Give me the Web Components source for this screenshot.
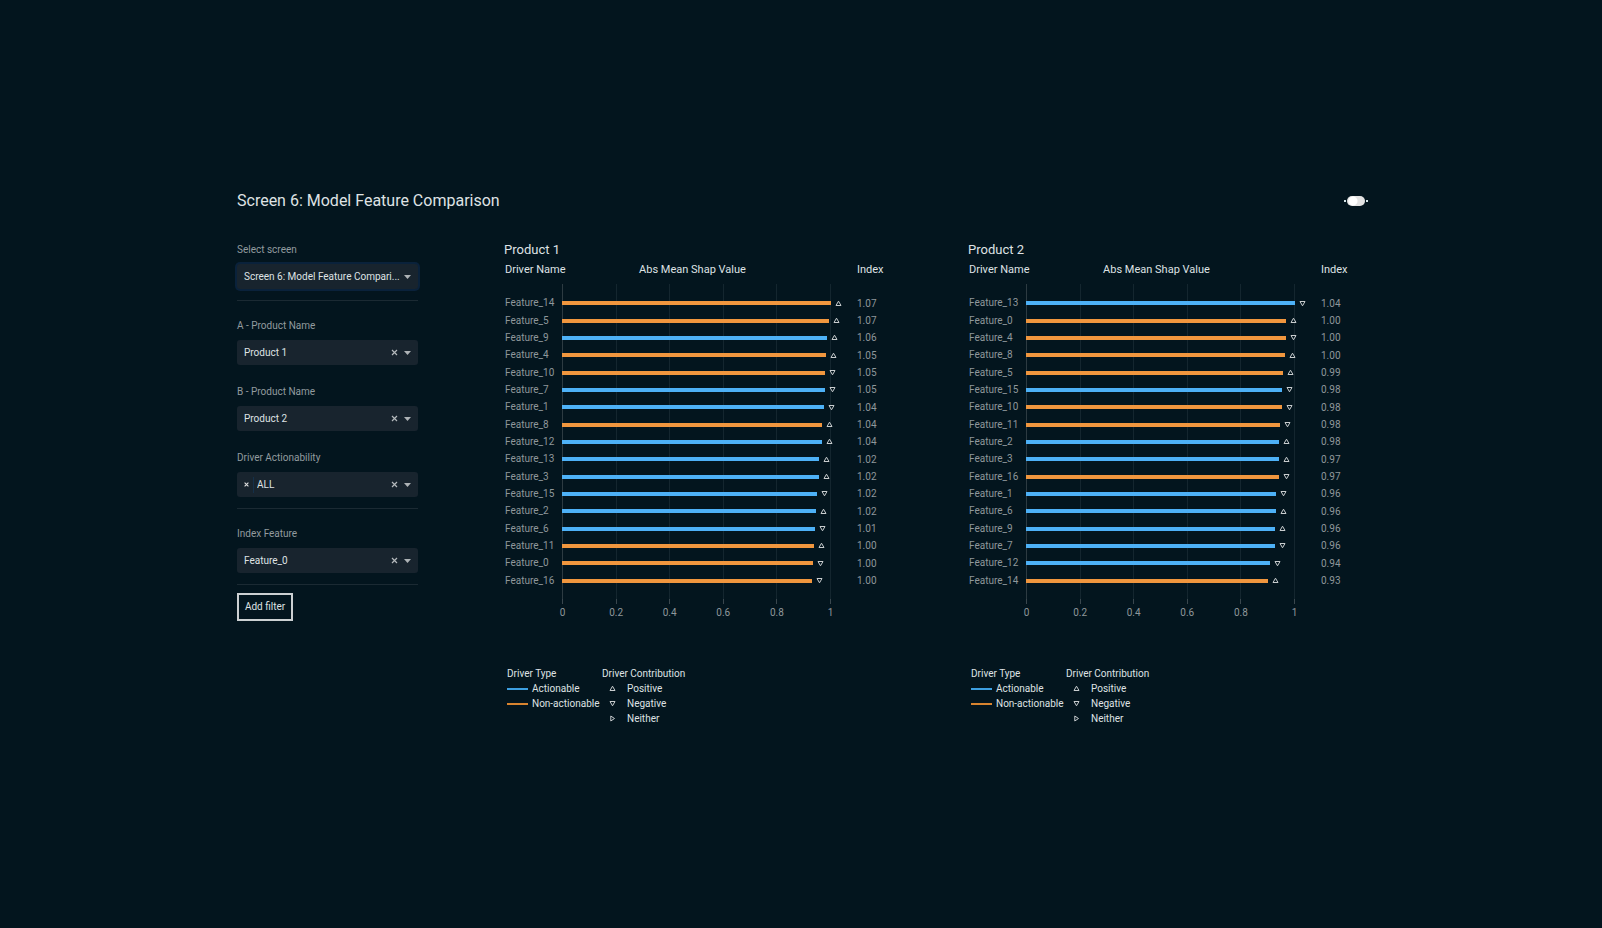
<!DOCTYPE html>
<html lang="en">
<head>
<meta charset="utf-8">
<title>Model Feature Comparison</title>
<style>
  body { margin: 0; background: #03151e; color: #dfe2e4; font: 10px/16px Roboto, "Liberation Sans", sans-serif; }
</style>
</head>
<body>
<feature-dashboard></feature-dashboard>

<template id="tpl-dashboard">
  <style>
    :host { display: block; padding: 192px 234px 48px 237px; }
    header { display: flex; justify-content: space-between; align-items: center; height: 18px; }
    h1 { margin: 0; font-size: 16px; line-height: 20px; font-weight: 400; }
    main { display: grid; grid-template-columns: 181px 1fr 1fr; column-gap: 64px; margin-top: 32px; }
    aside { display: flex; flex-direction: column; }
    product-chart:first-of-type { margin-left: 22px; margin-right: -11px; }
    product-chart:last-of-type { margin-left: 11px; }
    hr { width: 100%; height: 1px; margin: 11px 0 0; border: 0; background: #1b2a33; }
    hr.break { margin-bottom: 17px; }
    button { align-self: flex-start; box-sizing: border-box; width: 56px; height: 28px; margin-top: 8px; padding: 0;
      border: 2px solid #ccd0d2; background: transparent; color: inherit; font: inherit; }
  </style>
  <header>
    <h1>Screen 6: Model Feature Comparison</h1>
    <theme-switch></theme-switch>
  </header>
  <main>
    <aside>
      <filter-field label="Select screen" value="Screen 6: Model Feature Compari..." focused></filter-field>
      <hr class="break">
      <filter-field label="A - Product Name" value="Product 1" clearable></filter-field>
      <filter-field class="next" label="B - Product Name" value="Product 2" clearable></filter-field>
      <filter-field class="next" label="Driver Actionability" value="ALL" clearable tag></filter-field>
      <hr class="break">
      <filter-field label="Index Feature" value="Feature_0" clearable></filter-field>
      <hr>
      <button type="button">Add filter</button>
    </aside>
    <product-chart name="Product 1"></product-chart>
    <product-chart name="Product 2"></product-chart>
  </main>
</template>

<template id="tpl-switch">
  <style>
    :host { display: block; }
    label { display: flex; align-items: center; gap: 1px; }
    i { width: 2px; height: 2px; background: #d4e4e8; }
    input { appearance: none; display: block; width: 18px; height: 10px; margin: 0; border-radius: 5px;
      background: radial-gradient(circle at 6px 5px, #fff 4px, #e3e3e3 5px); }
  </style>
  <label><i></i><input type="checkbox" role="switch" aria-label="Theme"><i></i></label>
</template>

<template id="tpl-field">
  <style>
    :host { display: block; }
    :host(.next) { margin-top: 19px; }
    label { display: block; color: #929b9f; line-height: 16px; margin-bottom: 6px; }
    .box { display: flex; align-items: center; box-sizing: border-box; height: 25px; padding: 0 7px; border-radius: 3px; background: #18242e; }
    :host([focused]) .box { box-shadow: 0 0 0 2px #0a223b; }
    select { flex: 1; min-width: 0; height: 100%; appearance: none; border: 0; margin: 0; padding: 0; background: transparent; color: inherit; font: inherit; outline: 0; }
    button { border: 0; background: none; padding: 0; margin: 0; color: #b4b9bc; display: flex; }
    .clear { margin-right: 6px; }
    .drop { color: #aeb3b6; display: block; }
    .remove { padding-right: 4px; margin-right: 3px; height: 16px; align-items: center; border-right: 1px solid #14304a; color: #e0e0e0; }
    :host(:not([clearable])) .clear, :host(:not([tag])) .remove { display: none; }
  </style>
  <label for="choice"></label>
  <div class="box">
    <button class="remove" type="button" aria-label="Remove"><svg width="5" height="5" viewBox="0 0 5 5"><path d="M.6.6 4.4 4.4M4.4.6.6 4.4" stroke="currentColor" stroke-width="1.1"/></svg></button>
    <select id="choice"><option></option></select>
    <button class="clear" type="button" aria-label="Clear"><svg width="7" height="7" viewBox="0 0 7 7"><path d="M1 1 6 6M6 1 1 6" stroke="currentColor" stroke-width="1.2"/></svg></button>
    <svg class="drop" width="7" height="4" viewBox="0 0 7 4"><path d="M0 0H7L3.500 4Z" fill="currentColor"/></svg>
  </div>
</template>

<template id="tpl-chart">
  <style>
    :host { display: block; min-width: 0; }
    h2 { margin: 0; font-size: 13px; line-height: 16px; font-weight: 400; }
    .chart { display: grid; grid-template-columns: 58px 1fr 73px; }
    .grid { grid-column: 2; grid-row: 1; display: flex; justify-content: space-between; margin-top: 26px; }
    .grid i { width: 1px; background: #14262f; }
    .grid i:first-child { background: #2d3b42; }
    table { grid-column: 1 / -1; grid-row: 1; table-layout: fixed; width: 100%; border-collapse: collapse; margin-bottom: 10px; position: relative; }
    th, td { padding: 0; text-align: left; font-weight: 400; white-space: nowrap; vertical-align: middle; }
    thead th { font-size: 11px; line-height: 16px; height: 36px; vertical-align: top; padding-top: 4px; box-sizing: border-box; }
    thead th:nth-child(2) { text-align: center; padding-right: 8px; }
    tbody th, tbody td { color: #8f979b; line-height: 17px; }
    tbody tr:nth-child(3n+1) th { line-height: 18px; }
    .name { padding-left: 1px; }
    .index { padding-left: 26px; }
    .bar { display: flex; align-items: center; gap: 4px; }
    .bar i { flex: none; height: 4px; background: #f0963e; }
    .bar i.a { background: #4db1f7; }
    svg { flex: none; display: block; }
    .axis { grid-column: 2; display: flex; justify-content: space-between; color: #8f979b; }
    .axis span { width: 1px; display: flex; flex-direction: column; align-items: center; gap: 1px; }
    .axis span::before { content: ""; width: 1px; height: 5px; background: #3a474e; }
    .legend { display: flex; gap: 18px; margin: 45px 0 0 3px; }
    .legend ul { list-style: none; margin: 0; padding: 0; }
    .legend li { display: flex; align-items: center; height: 15px; gap: 4px; white-space: nowrap; }
    .legend .type { width: 77px; }
    .legend .kind li { gap: 11px; padding-left: 7px; }
    .legend i { width: 21px; height: 2px; background: #d9842f; flex: none; }
    .legend i.a { background: #3d9fe0; }
    .legend h3 { margin: 0; font-size: 10px; line-height: 15px; font-weight: 400; white-space: nowrap; }
  </style>
  <h2></h2>
  <div class="chart">
    <div class="grid"><i></i><i></i><i></i><i></i><i></i><i></i></div>
    <table>
      <colgroup><col style="width:58px"><col><col style="width:73px"></colgroup>
      <thead><tr><th class="name">Driver Name</th><th>Abs Mean Shap Value</th><th class="index">Index</th></tr></thead>
      <tbody></tbody>
    </table>
    <div class="axis"><span>0</span><span>0.2</span><span>0.4</span><span>0.6</span><span>0.8</span><span>1</span></div>
  </div>
  <div class="legend">
    <div class="type"><h3>Driver Type</h3><ul><li><i class="a"></i>Actionable</li><li><i></i>Non-actionable</li></ul></div>
    <div class="kind"><h3>Driver Contribution</h3><ul><li data-m="u">Positive</li><li data-m="d">Negative</li><li data-m="r">Neither</li></ul></div>
  </div>
</template>

<script>
  const stamp = (host, id) => {
    const root = host.attachShadow({ mode: 'open' });
    root.append(document.getElementById(id).content.cloneNode(true));
    return root;
  };

  // Outline triangles: up = positive, down = negative, right = neither
  const shapes = { u: 'M1 5.500H6L3.500 1.200Z', d: 'M1 1.500H6L3.500 5.800Z', r: 'M1.800 1V6L5.500 3.500Z' };
  const marker = m => `<svg width="7" height="7" viewBox="0 0 7 7" aria-hidden="true"><path d="${shapes[m]}" fill="none" stroke="#c9cdcf" stroke-width="1"/></svg>`;

  // feature number, share of the axis, a(ctionable)/n(on-actionable) + marker, index
  const data = {
    'Product 1': [
      [14, 100, 'nu', '1.07'], [5, 99.3, 'nu', '1.07'], [9, 98.6, 'au', '1.06'], [4, 98, 'nu', '1.05'],
      [10, 97.7, 'nd', '1.05'], [7, 97.6, 'ad', '1.05'], [1, 97.4, 'ad', '1.04'], [8, 96.8, 'nu', '1.04'],
      [12, 96.7, 'au', '1.04'], [13, 95.6, 'au', '1.02'], [3, 95.4, 'au', '1.02'], [15, 94.9, 'ad', '1.02'],
      [2, 94.6, 'au', '1.02'], [6, 94.1, 'ad', '1.01'], [11, 93.7, 'nu', '1.00'], [0, 93.3, 'nd', '1.00'],
      [16, 93, 'nd', '1.00']],
    'Product 2': [
      [13, 100, 'ad', '1.04'], [0, 96.6, 'nu', '1.00'], [4, 96.5, 'nd', '1.00'], [8, 96.1, 'nu', '1.00'],
      [5, 95.7, 'nu', '0.99'], [15, 95.1, 'ad', '0.98'], [10, 95, 'nd', '0.98'], [11, 94.5, 'nd', '0.98'],
      [2, 94.2, 'au', '0.98'], [3, 94.2, 'au', '0.97'], [16, 93.9, 'nd', '0.97'], [1, 93, 'ad', '0.96'],
      [6, 92.8, 'au', '0.96'], [9, 92.4, 'au', '0.96'], [7, 92.4, 'ad', '0.96'], [12, 90.7, 'ad', '0.94'],
      [14, 89.8, 'nu', '0.93']]
  };

  customElements.define('theme-switch', class extends HTMLElement {
    constructor() { super(); stamp(this, 'tpl-switch'); }
  });

  customElements.define('filter-field', class extends HTMLElement {
    connectedCallback() {
      if (this.shadowRoot) return;
      const root = stamp(this, 'tpl-field');
      root.querySelector('label').textContent = this.getAttribute('label');
      root.querySelector('option').textContent = this.getAttribute('value');
    }
  });

  customElements.define('product-chart', class extends HTMLElement {
    connectedCallback() {
      if (this.shadowRoot) return;
      const root = stamp(this, 'tpl-chart');
      const name = this.getAttribute('name');
      root.querySelector('h2').textContent = name;
      root.querySelector('tbody').innerHTML = data[name].map(([n, w, k, index]) =>
        `<tr><th class="name" scope="row">Feature_${n}</th><td><div class="bar"><i class="${k[0]}" style="width:${w}%"></i>${marker(k[1])}</div></td><td class="index">${index}</td></tr>`).join('');
      root.querySelectorAll('[data-m]').forEach(li => li.insertAdjacentHTML('afterbegin', marker(li.dataset.m)));
    }
  });

  customElements.define('feature-dashboard', class extends HTMLElement {
    constructor() { super(); stamp(this, 'tpl-dashboard'); }
  });
</script>
</body>
</html>
